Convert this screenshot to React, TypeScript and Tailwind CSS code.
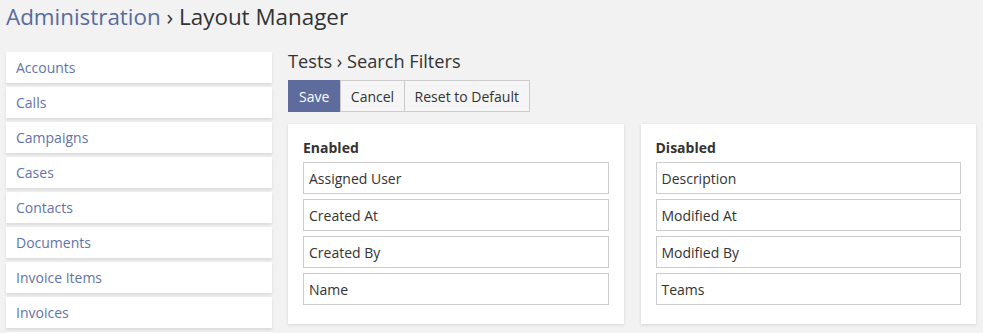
import React from "react";

const scopes = [
  "Accounts",
  "Calls",
  "Campaigns",
  "Cases",
  "Contacts",
  "Documents",
  "Invoice Items",
  "Invoices",
  "Leads",
];

const enabled = ["Assigned User", "Created At", "Created By", "Name"];
const disabled = ["Description", "Modified At", "Modified By", "Teams"];

function FieldPanel({ title, fields }: { title: string; fields: string[] }) {
  return (
    <div className="flex-1 bg-white px-[15px] pt-[14px] pb-[19px] shadow-[0_1px_3px_rgba(0,0,0,0.12)]">
      <div className="text-[14px] font-bold text-[#333] leading-[20px] mb-[4px]">{title}</div>
      <ul className="flex flex-col gap-[5px]">
        {fields.map((f) => (
          <li
            key={f}
            className="h-[32px] border border-[#ccc] bg-white px-[5px] flex items-center text-[14px] text-[#333]"
          >
            {f}
          </li>
        ))}
      </ul>
    </div>
  );
}

export default function App() {
  return (
    <div
      className="h-[333px] overflow-hidden bg-[#f2f2f2] px-[6px] pt-[1px] text-[#333]"
      style={{ fontFamily: '"Open Sans", sans-serif' }}
    >
      <h1 className="text-[22.4px] leading-[32px] font-normal">
        <a className="text-[#5a6b9e]">Administration</a>
        <span className="text-[#333]"> › Layout Manager</span>
      </h1>

      <div className="flex gap-[16px] mt-[19px]">
        <ul className="w-[266px] shrink-0 flex flex-col gap-[4px]">
          {scopes.map((s) => (
            <li
              key={s}
              className="h-[31px] bg-white px-[10px] flex items-center text-[14px] text-[#6473a8] shadow-[0_2px_3px_rgba(0,0,0,0.1)]"
            >
              {s}
            </li>
          ))}
        </ul>

        <div className="w-[688px]">
          <div className="text-[18.2px] leading-[24px] mt-[-3px]">Tests › Search Filters</div>
          <div className="flex mt-[7px] text-[14px]">
            <button className="h-[32px] px-[10px] bg-[#5d6c9c] border border-[#5d6c9c] text-white">Save</button>
            <button className="h-[32px] px-[9.5px] bg-[#f5f5f5] border border-[#ccc] text-[#333]">Cancel</button>
            <button className="h-[32px] px-[10px] bg-[#f5f5f5] border border-[#ccc] border-l-0 text-[#333]">
              Reset to Default
            </button>
          </div>
          <div className="flex gap-[17px] mt-[12px]">
            <FieldPanel title="Enabled" fields={enabled} />
            <FieldPanel title="Disabled" fields={disabled} />
          </div>
        </div>
      </div>
    </div>
  );
}
